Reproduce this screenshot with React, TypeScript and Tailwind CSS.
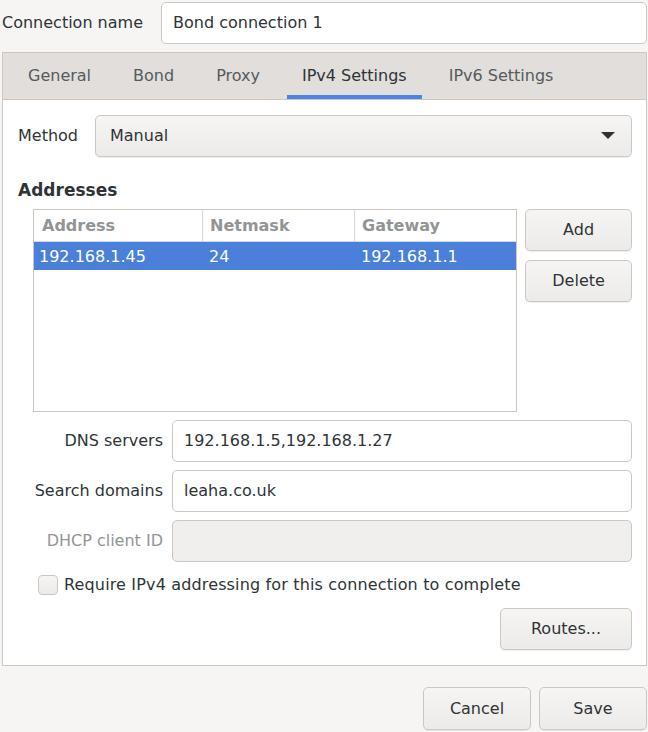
import React from 'react';

const font = { fontFamily: '"DejaVu Sans", sans-serif' };

const Btn: React.FC<{ children: React.ReactNode; className?: string }> = ({ children, className = '' }) => (
  <button
    className={`h-[42px] rounded-[5px] border border-[#cdc7c2] bg-gradient-to-b from-[#f6f5f4] to-[#edebe9] text-[16px] text-[#2e3436] shadow-[0_1px_1px_rgba(0,0,0,0.07)] ${className}`}
  >
    {children}
  </button>
);

const Field: React.FC<{ label: string; value?: string; disabled?: boolean }> = ({ label, value, disabled }) => (
  <div className="flex items-center h-[42px]">
    <span className={`w-[154px] pr-[9px] text-right text-[16px] ${disabled ? 'text-[#929595]' : 'text-[#2e3436]'}`}>{label}</span>
    <div
      className={`flex-1 h-[42px] flex items-center px-[11px] rounded-[5px] border border-[#cdc7c2] text-[16px] text-[#2e3436] ${disabled ? 'bg-[#f1efee]' : 'bg-white'}`}
    >
      {value}
    </div>
  </div>
);

export default function App() {
  const tabs = ['General', 'Bond', 'Proxy', 'IPv4 Settings', 'IPv6 Settings'];

  return (
    <div style={font} className="w-[648px] h-[732px] bg-[#f6f5f4] text-[#2e3436] overflow-hidden">
      {/* Connection name */}
      <div className="flex items-center pt-[2px] pr-[1px]">
        <span className="w-[161px] pl-[2px] text-[16px]">Connection name</span>
        <div className="flex-1 h-[42px] flex items-center px-[11px] bg-white border border-[#cdc7c2] rounded-[5px] text-[16px]">
          Bond connection 1
        </div>
      </div>

      {/* Notebook */}
      <div className="mt-[8px] ml-[2px] mr-[1px] border border-[#cdc7c2]">
        <div className="h-[47px] bg-[#e1dedb] flex items-stretch gap-[12px] pl-[10px] border-b border-[#cdc7c2]">
          {tabs.map((t) => (
            <div
              key={t}
              className={`relative flex items-center px-[15px] text-[16px] ${t === 'IPv4 Settings' ? 'text-[#2e3436]' : 'text-[#555b5d]'}`}
            >
              {t}
              {t === 'IPv4 Settings' && <div className="absolute left-0 right-0 bottom-0 h-[4px] bg-[#4a86e8]" />}
            </div>
          ))}
        </div>

        <div className="bg-white h-[565px] pt-[15px] pl-[15px] pr-[14px]">
          {/* Method */}
          <div className="flex items-center h-[42px]">
            <span className="w-[77px] text-[16px]">Method</span>
            <div className="flex-1 h-[42px] flex items-center justify-between pl-[14px] pr-[16px] rounded-[5px] border border-[#cdc7c2] bg-gradient-to-b from-[#f6f5f4] to-[#edebe9] shadow-[0_1px_1px_rgba(0,0,0,0.07)] text-[16px]">
              <span>Manual</span>
              <svg width="14" height="8" viewBox="0 0 14 8">
                <path d="M0 0 H14 L7 7 Z" fill="#2e3436" />
              </svg>
            </div>
          </div>

          <div className="mt-[21px] text-[17px] leading-[24px] font-bold">Addresses</div>

          {/* Address table and buttons */}
          <div className="flex mt-[7px] pl-[15px] gap-[8px]">
            <div className="w-[485px] h-[203px] border border-[#cdc7c2] bg-white">
              <div className="flex h-[32px] border-b border-[#dcd8d5] text-[16px] font-bold text-[#929595]">
                <div className="w-[169px] flex items-center pl-[8px] border-r border-[#dcd8d5]">Address</div>
                <div className="w-[152px] flex items-center pl-[7px] border-r border-[#dcd8d5]">Netmask</div>
                <div className="flex-1 flex items-center pl-[7px]">Gateway</div>
              </div>
              <div className="flex h-[28px] bg-[#4a80d9] text-white text-[16px]">
                <div className="w-[169px] flex items-center pl-[5px] pt-[2px]">192.168.1.45</div>
                <div className="w-[152px] flex items-center pl-[6px] pt-[2px]">24</div>
                <div className="flex-1 flex items-center pl-[6px] pt-[2px]">192.168.1.1</div>
              </div>
            </div>
            <div className="flex flex-col gap-[9px] w-[107px]">
              <Btn>Add</Btn>
              <Btn>Delete</Btn>
            </div>
          </div>

          {/* Fields */}
          <div className="mt-[8px] flex flex-col gap-[8px]">
            <Field label="DNS servers" value="192.168.1.5,192.168.1.27" />
            <Field label="Search domains" value="leaha.co.uk" />
            <Field label="DHCP client ID" disabled />
          </div>

          <label className="mt-[11px] flex items-center gap-[6px] pl-[20px]">
            <span className="w-[20px] h-[20px] rounded-[4px] border border-[#cdc7c2] bg-gradient-to-b from-[#f6f5f4] to-[#edebe9]" />
            <span className="text-[16px] tracking-[0.15px]">Require IPv4 addressing for this connection to complete</span>
          </label>

          <div className="flex justify-end mt-[11px]">
            <Btn className="w-[132px]">Routes...</Btn>
          </div>
        </div>
      </div>

      {/* Dialog buttons */}
      <div className="flex justify-end gap-[8px] mt-[21px] pr-[1px]">
        <Btn className="w-[108px] h-[43px]">Cancel</Btn>
        <Btn className="w-[108px] h-[43px]">Save</Btn>
      </div>
    </div>
  );
}
